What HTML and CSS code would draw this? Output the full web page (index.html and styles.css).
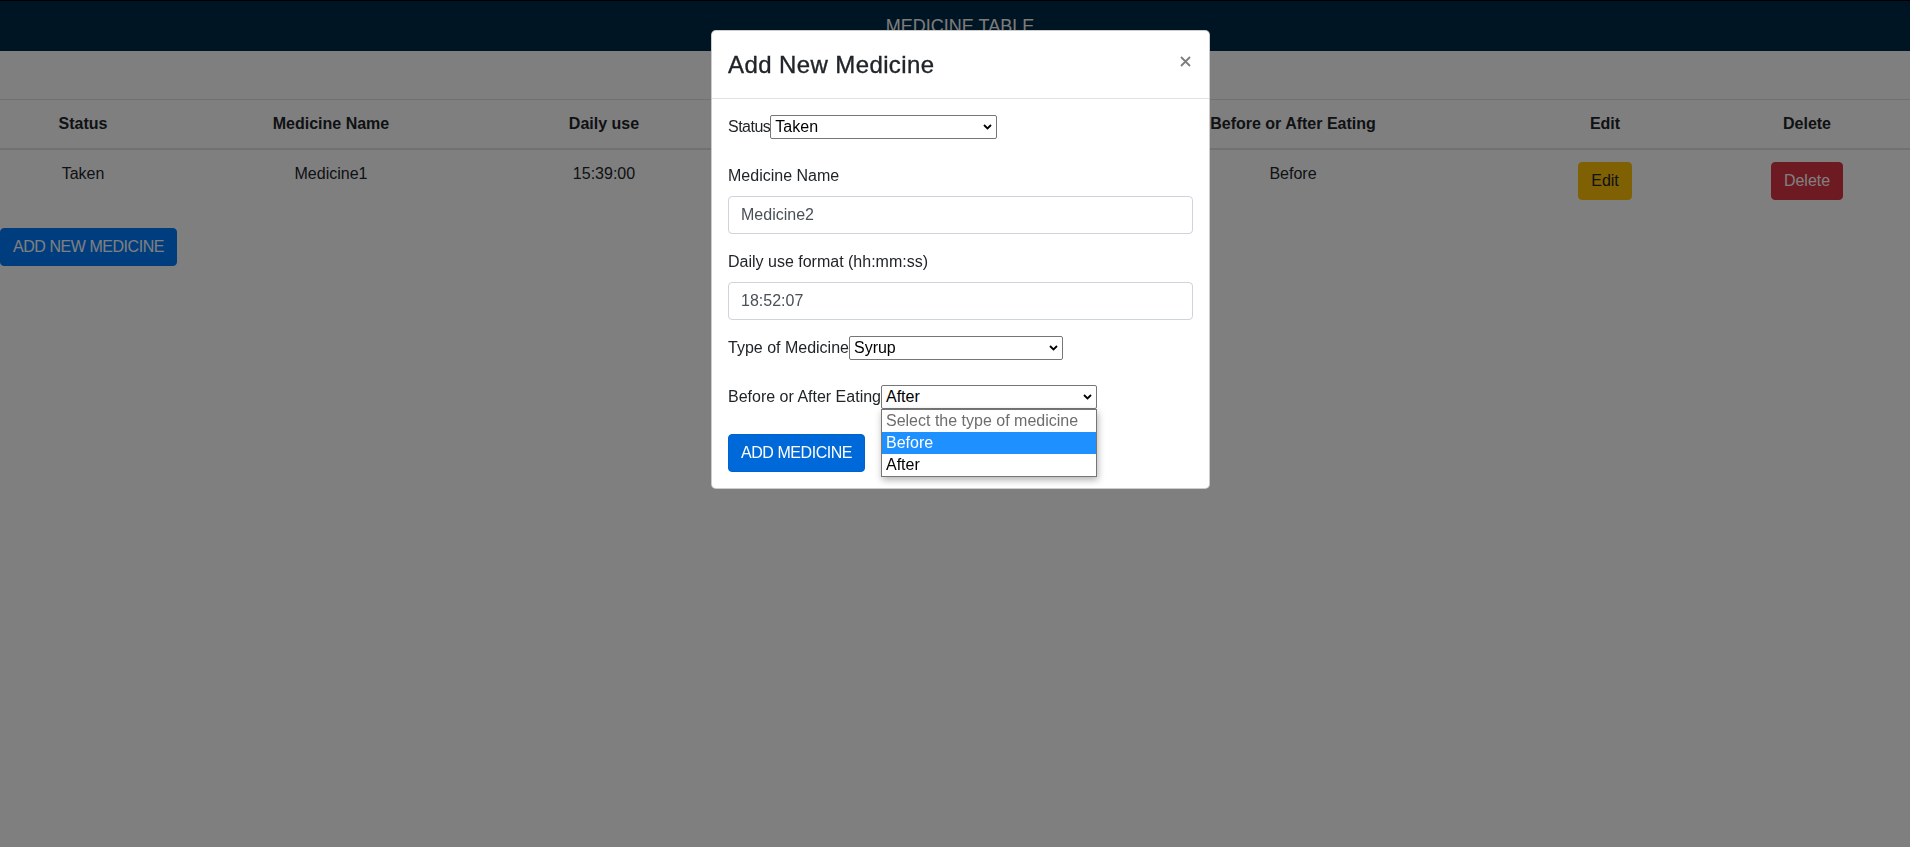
FILE: index.html
```html
<!DOCTYPE html>
<html lang="en">
<head>
<meta charset="utf-8">
<title>Medicine Table</title>
<link rel="stylesheet" href="styles.css">
</head>
<body>
<header class="topbar">
  <h1 class="topbar-title">MEDICINE TABLE</h1>
</header>
<main class="content">
  <table class="med-table">
    <colgroup>
      <col class="c-status"><col class="c-name"><col class="c-daily"><col class="c-type"><col class="c-eat"><col class="c-edit"><col class="c-del">
    </colgroup>
    <thead>
      <tr>
        <th>Status</th>
        <th>Medicine Name</th>
        <th>Daily use</th>
        <th>Type of Medicine</th>
        <th>Before or After Eating</th>
        <th>Edit</th>
        <th>Delete</th>
      </tr>
    </thead>
    <tbody>
      <tr>
        <td>Taken</td>
        <td>Medicine1</td>
        <td>15:39:00</td>
        <td>Pill</td>
        <td>Before</td>
        <td><button class="btn btn-warning">Edit</button></td>
        <td><button class="btn btn-danger">Delete</button></td>
      </tr>
    </tbody>
  </table>
  <button class="btn btn-primary btn-caps">ADD NEW MEDICINE</button>
</main>

<div class="backdrop"></div>

<div class="modal">
  <div class="modal-dialog">
    <div class="modal-header">
      <h5 class="modal-title">Add New Medicine</h5>
      <button class="close" aria-label="Close">
        <svg width="11" height="11" viewBox="0 0 11 11"><path d="M1 1L10 10M10 1L1 10" stroke="#7d7d7d" stroke-width="1.8" fill="none"/></svg>
      </button>
    </div>
    <div class="modal-body">
      <div class="inline-row">
        <label class="inline-label tight">Status</label>
        <div class="fake-select w-status">
          <span>Taken</span>
          <svg class="chev" width="9" height="6" viewBox="0 0 9 6"><path d="M1 1L4.5 4.5L8 1" fill="none" stroke="#000" stroke-width="1.8"/></svg>
        </div>
      </div>

      <div class="form-group">
        <label class="field-label">Medicine Name</label>
        <input class="form-control" type="text" value="Medicine2">
      </div>

      <div class="form-group">
        <label class="field-label">Daily use format (hh:mm:ss)</label>
        <input class="form-control" type="text" value="18:52:07">
      </div>

      <div class="inline-row">
        <label class="inline-label">Type of Medicine</label>
        <div class="fake-select w-type">
          <span>Syrup</span>
          <svg class="chev" width="9" height="6" viewBox="0 0 9 6"><path d="M1 1L4.5 4.5L8 1" fill="none" stroke="#000" stroke-width="1.8"/></svg>
        </div>
      </div>

      <div class="inline-row">
        <label class="inline-label">Before or After Eating</label>
        <div class="select-wrap">
          <div class="fake-select w-eat">
            <span>After</span>
            <svg class="chev" width="9" height="6" viewBox="0 0 9 6"><path d="M1 1L4.5 4.5L8 1" fill="none" stroke="#000" stroke-width="1.8"/></svg>
          </div>
          <div class="dropdown">
            <div class="option placeholder">Select the type of medicine</div>
            <div class="option active">Before</div>
            <div class="option">After</div>
          </div>
        </div>
      </div>

      <button class="btn btn-primary-hover btn-caps">ADD MEDICINE</button>
    </div>
  </div>
</div>
</body>
</html>
```

FILE: styles.css
```css
html, body {
  margin: 0;
  padding: 0;
}

body {
  font-family: "Liberation Sans", Arial, sans-serif;
  font-size: 16px;
  line-height: 1.5;
  color: #212529;
  background: #fff;
}

/* top bar */
.topbar {
  height: 50px;
  border-top: 1px solid #000;
  background: #002a48;
  display: flex;
  align-items: center;
  justify-content: center;
  padding-left: 10px;
}

.topbar-title {
  margin: 0;
  font-size: 18px;
  font-weight: 400;
  line-height: 1;
  color: #f8f9fa;
}

/* table */
.content {
  padding-top: 48px;
}

.med-table {
  width: 100%;
  border-collapse: collapse;
  table-layout: fixed;
  margin-bottom: 16px;
}

.c-status { width: 166px; }
.c-name { width: 330px; }
.c-daily { width: 216px; }
.c-type { width: 368px; }
.c-eat { width: 426px; }
.c-edit { width: 198px; }
.c-del { width: 206px; }

.med-table th,
.med-table td {
  padding: 12px;
  text-align: center;
  vertical-align: top;
}

.med-table th {
  font-weight: 700;
  border-top: 1px solid #dee2e6;
  border-bottom: 2px solid #dee2e6;
}

.med-table td {
  border-top: 1px solid #dee2e6;
}

/* buttons */
.btn {
  display: inline-block;
  font-family: inherit;
  font-size: 16px;
  line-height: 24px;
  padding: 6px 12px;
  border: 1px solid transparent;
  border-radius: 4px;
  cursor: pointer;
  vertical-align: top;
}

.btn-caps {
  letter-spacing: -0.45px;
}

.btn-primary {
  background: #007bff;
  border-color: #007bff;
  color: #fff;
}

.btn-primary-hover {
  background: #0069d9;
  border-color: #0062cc;
  color: #fff;
}

.btn-warning {
  background: #ffc107;
  border-color: #ffc107;
  color: #212529;
}

.btn-danger {
  background: #dc3545;
  border-color: #dc3545;
  color: #fff;
}

/* modal */
.backdrop {
  position: fixed;
  inset: 0;
  background: rgba(0, 0, 0, 0.5);
  z-index: 10;
}

.modal {
  position: fixed;
  inset: 0;
  z-index: 20;
  display: flex;
  justify-content: center;
  align-items: flex-start;
  padding-left: 11px;
}

.modal-dialog {
  width: 499px;
  box-sizing: border-box;
  margin-top: 30px;
  background: #fff;
  border: 1px solid rgba(0, 0, 0, 0.2);
  border-radius: 5px;
}

.modal-header {
  display: flex;
  align-items: flex-start;
  padding: 16px 16px 15px;
  border-bottom: 1px solid #dee2e6;
}

.modal-title {
  margin: 0;
  font-size: 24px;
  font-weight: 400;
  line-height: 36px;
  letter-spacing: 0.4px;
  color: #212529;
  -webkit-text-stroke: 0.35px #212529;
}

.close {
  display: block;
  margin: 9px 2px 0 auto;
  padding: 0;
  width: 11px;
  height: 11px;
  border: 0;
  background: none;
  cursor: pointer;
}

.close svg {
  display: block;
}

.modal-body {
  padding: 16px;
}

.inline-row {
  display: flex;
  align-items: center;
  height: 24px;
  margin-bottom: 25px;
}

.inline-label {
  line-height: 24px;
}

.inline-label.tight {
  letter-spacing: -0.5px;
}

.fake-select {
  display: flex;
  align-items: center;
  justify-content: space-between;
  height: 24px;
  box-sizing: border-box;
  padding: 0 4px;
  border: 1px solid #767676;
  border-radius: 2px;
  background: #fff;
  color: #000;
  line-height: 22px;
}

.chev {
  display: block;
  flex: none;
}

.w-status { width: 227px; }
.w-type { width: 214px; }
.w-eat { width: 216px; }

.select-wrap {
  position: relative;
}

.dropdown {
  position: absolute;
  top: 100%;
  left: 0;
  width: 100%;
  box-sizing: border-box;
  border: 1px solid #767676;
  background: #fff;
  box-shadow: 1px 3px 7px rgba(0, 0, 0, 0.3);
  z-index: 2;
}

.option {
  height: 22px;
  line-height: 22px;
  padding: 0 4px;
  color: #000;
  white-space: nowrap;
}

.option.placeholder {
  color: #6d6d6d;
}

.option.active {
  background: #1e90ff;
  color: #fff;
}

.form-group {
  margin-bottom: 16px;
}

.field-label {
  display: block;
  margin-bottom: 8px;
}

.form-control {
  display: block;
  width: 100%;
  height: 38px;
  box-sizing: border-box;
  padding: 6px 12px;
  font-family: inherit;
  font-size: 16px;
  line-height: 24px;
  color: #495057;
  background: #fff;
  border: 1px solid #ced4da;
  border-radius: 4px;
}
```
